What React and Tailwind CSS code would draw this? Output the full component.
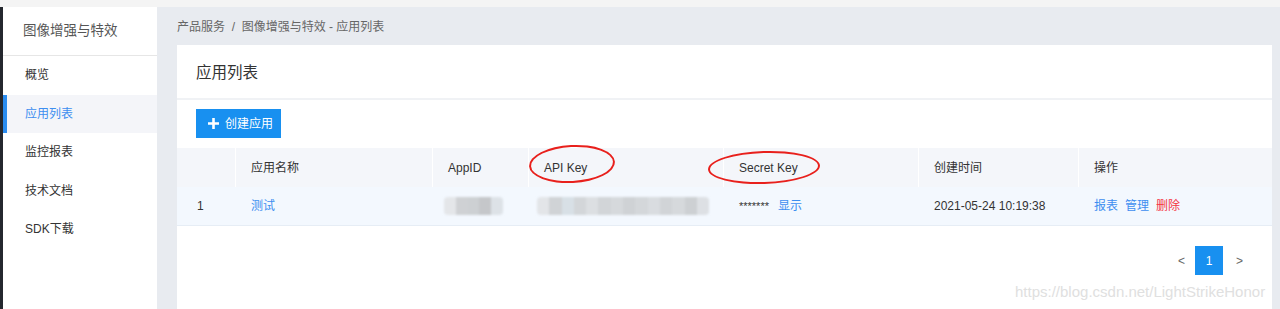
import React from 'react';

const menu = ['概览', '应用列表', '监控报表', '技术文档', 'SDK下载'];
const cols = ['', '应用名称', 'AppID', 'API Key', 'Secret Key', '创建时间', '操作'];

const appIdBlur = ['#e4e6e9', '#cfd1d4', '#cdd0d3', '#c5c7ca', '#dde2e7'];
const apiKeyBlur = [
  '#e3e5e8', '#d0d3d6', '#d8e0e6', '#d3d6d9', '#dcdfe2', '#d2d5d8', '#d6d9dc',
  '#cfd2d5', '#d4d7da', '#d9dce0', '#d1d4d7', '#d6d9dc', '#cdd0d3', '#dde0e4',
];

const Blur = ({ shades, w }) => (
  <div className="flex h-[18px] blur-[1px] rounded-sm overflow-hidden">
    {shades.map((c, i) => (
      <div key={i} className="h-full" style={{ width: w, background: c }} />
    ))}
  </div>
);

export default function App() {
  return (
    <div
      className="relative w-[1280px] h-[309px] overflow-hidden flex flex-col bg-[#e8ebf0] text-[#333]"
      style={{ fontFamily: '"Liberation Sans", "Noto Sans CJK SC", sans-serif' }}
    >
      <div className="h-[7px] shrink-0 bg-[#f4f4f4]" />
      <div className="flex flex-1">
        <div className="w-[3px] bg-[#24272e]" />
        {/* 侧边栏 */}
        <aside className="w-[154px] bg-white">
          <div className="h-[49px] flex items-center pl-5 pt-[1px] text-[13.5px] text-[#555] border-b border-[#e6e6e6]">
            图像增强与特效
          </div>
          {menu.map((m) => (
            <div
              key={m}
              className={`h-[38.5px] flex items-center text-[12px] ${
                m === '应用列表'
                  ? 'bg-[#f4f5f9] text-[#3d8ef0] border-l-4 border-[#2a8cf0] pl-[18px]'
                  : 'text-[#333] pl-[22px]'
              }`}
            >
              {m}
            </div>
          ))}
        </aside>

        <main className="flex-1 flex flex-col pl-5 pr-2">
          <div className="h-[38px] flex items-center pt-[1px] text-[12px] text-[#666]">
            产品服务&nbsp;&nbsp;/&nbsp;&nbsp;图像增强与特效 - 应用列表
          </div>
          <div className="flex-1 bg-white">
            <div className="h-[55px] flex items-center pl-[19px] pt-[3px] text-[15.5px] text-[#333] border-b-2 border-[#f0f2f5]">
              应用列表
            </div>
            <div className="pt-[9px] pl-[19px]">
              <button className="h-[29px] w-[85px] flex items-center pl-[12px] gap-[6px] bg-[#1890f0] text-white text-[12px]">
                <svg width="11" height="11" viewBox="0 0 11 11">
                  <path d="M5.5 0v11M0 5.5h11" stroke="white" strokeWidth="2.6" />
                </svg>
                创建应用
              </button>
            </div>

            <div className="mt-[10px] grid grid-cols-[58px_197px_96px_195px_195px_160px_194px] text-[12px]">
              {cols.map((c, i) => (
                <div
                  key={i}
                  className={`h-[39px] flex items-center bg-[#f4f6fa] ${
                    i > 0 ? 'border-l border-white pl-[15px]' : ''
                  }`}
                >
                  {c}
                </div>
              ))}

              <div className="h-[39px] flex items-center pl-5 bg-[#f3f8fe] border-b border-[#e6edf5]">1</div>
              <div className="h-[39px] flex items-center pl-4 bg-[#f3f8fe] border-b border-[#e6edf5] text-[#3d8ef0]">
                测试
              </div>
              <div className="h-[39px] flex items-center pl-[12px] bg-[#f3f8fe] border-b border-[#e6edf5]">
                <Blur shades={appIdBlur} w="11.8px" />
              </div>
              <div className="h-[39px] flex items-center pl-[9px] bg-[#f3f8fe] border-b border-[#e6edf5]">
                <Blur shades={apiKeyBlur} w="12.3px" />
              </div>
              <div className="h-[39px] flex items-center pl-4 gap-[9px] bg-[#f3f8fe] border-b border-[#e6edf5]">
                <span className="text-[11px]">*******</span>
                <span className="text-[#3d8ef0]">显示</span>
              </div>
              <div className="h-[39px] flex items-center pl-4 bg-[#f3f8fe] border-b border-[#e6edf5]">
                2021-05-24 10:19:38
              </div>
              <div className="h-[39px] flex items-center pl-4 gap-[7px] bg-[#f3f8fe] border-b border-[#e6edf5]">
                <span className="text-[#3d8ef0]">报表</span>
                <span className="text-[#3d8ef0]">管理</span>
                <span className="text-[#f5343f]">删除</span>
              </div>
            </div>

            <div className="mt-[20px] flex justify-end items-center pr-[29px] text-[12px] text-[#666]">
              <span>&lt;</span>
              <div className="ml-[10px] mr-[13px] w-[28px] h-[29px] flex items-center justify-center bg-[#1890f0] text-white">
                1
              </div>
              <span>&gt;</span>
            </div>
          </div>
        </main>
      </div>

      {/* 红色圈注 */}
      <div className="absolute left-[529px] top-[145px] w-[86px] h-[38px] rounded-[50%] border-2 border-[#e8201c] -rotate-3" />
      <div className="absolute left-[708px] top-[151px] w-[112px] h-[33px] rounded-[50%] border-2 border-[#e8201c] -rotate-2" />

      {/* 水印 */}
      <div className="absolute left-[1015px] top-[281px] text-[15px] text-[#e0e0e0]">
        https://blog.csdn.net/LightStrikeHonor
      </div>
    </div>
  );
}
